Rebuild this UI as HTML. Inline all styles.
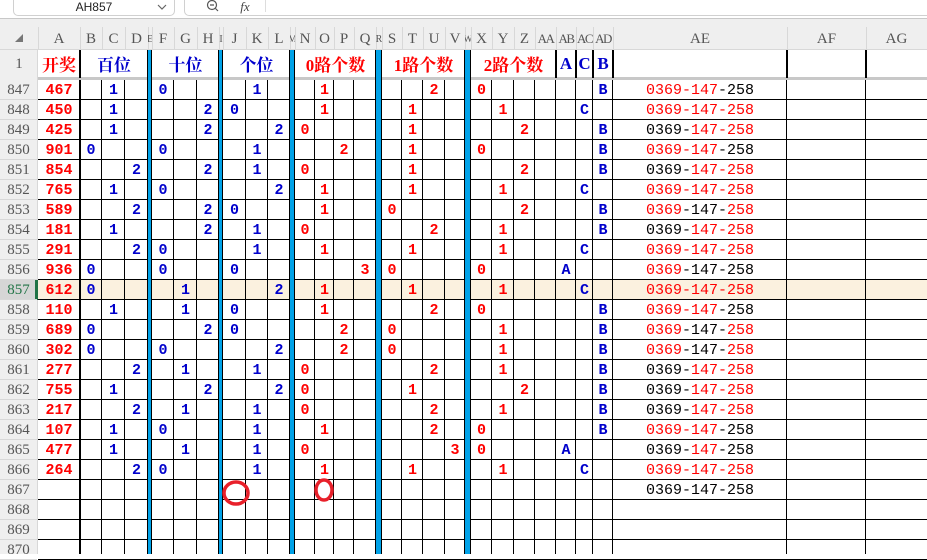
<!DOCTYPE html>
<html><head><meta charset="utf-8">
<style>
*{margin:0;padding:0;box-sizing:border-box}
body{width:927px;height:554px;overflow:hidden;background:#fff;position:relative;font-family:"Liberation Serif","Noto Serif CJK SC",serif}
.d{position:absolute}
.c{position:absolute;display:flex;align-items:center;justify-content:center;white-space:nowrap}
</style></head><body>
<div id="root"></div>
<script>
var B=[0,38,80,102,125,148,152,174,197,219,223,246,268,290,295,315,334,354,376,382,402,423,445,465,471,492,514,535,556,576,593,613,787,866,927];
var N=["","A","B","C","D","E","F","G","H","I","J","K","L","M","N","O","P","Q","R","S","T","U","V","W","X","Y","Z","AA","AB","AC","AD","AE","AF","AG"];
var blue={5:1,9:1,13:1,18:1,23:1};
var h='';
function box(x,y,w,hh,st){h+='<div class="d" style="left:'+x+'px;top:'+y+'px;width:'+w+'px;height:'+hh+'px;'+st+'"></div>';}
function txt(x,y,w,hh,t,st){h+='<div class="c" style="left:'+x+'px;top:'+y+'px;width:'+w+'px;height:'+hh+'px;'+st+'">'+t+'</div>';}
box(13,-6,162,22,'border:1px solid #d0d0d0;border-radius:5px;background:#fff');
txt(13,0,162,14,'AH857','font-size:12px;color:#222;font-family:Liberation Sans,sans-serif');
h+='<svg class="d" style="left:156px;top:2px" width="12" height="10"><path d="M2 3 L6 7 L10 3" fill="none" stroke="#666" stroke-width="1.2"/></svg>';
box(184,-6,760,22,'border:1px solid #d0d0d0;border-radius:5px;background:#fff');
h+='<svg class="d" style="left:205px;top:0" width="16" height="14"><circle cx="7" cy="5" r="4.5" fill="none" stroke="#555" stroke-width="1.2"/><path d="M5 5H9M10.5 8.5L13 11" stroke="#555" stroke-width="1.2"/></svg>';
txt(236,0,18,14,'<i>fx</i>','font-size:13px;color:#444');
box(265,0,1,12,'background:#ddd');
box(0,18,927,1,'background:#c8c8c8');
box(0,19,927,30,'background:#efefef');
box(0,49,927,1,'background:#d8d8d8');
h+='<svg class="d" style="left:14px;top:33px" width="10" height="10"><path d="M9 1V9H1Z" fill="#777"/></svg>';
for(var i=1;i<N.length;i++){var x=B[i],w=B[i+1]-B[i];box(x,27,1,22,'background:#d8d8d8');
 var fs=w<10?10:(N[i].length>1&&w<25?13:15); var ls=(N[i].length>1&&w<25)?';letter-spacing:-1.5px':'';
 txt(x,27,w,24,N[i],'font-size:'+fs+'px;color:#555;overflow:hidden'+ls);}
box(0,50,38,504,'background:#efefef');
box(37,50,1,504,'background:#d8d8d8');
txt(0,50,38,28,'1','font-size:15px;color:#555');
box(38,77,889,3,'background:#c8c8c8');
var R='color:#f00',Bl='color:#00c';
var hs='font-weight:bold;font-size:17px;';
txt(38,50,42,27,'开奖',hs+R);
txt(80,50,68,27,'百位',hs+Bl);txt(152,50,67,27,'十位',hs+Bl);txt(223,50,67,27,'个位',hs+Bl);
txt(295,50,81,27,'0路个数',hs+R);txt(382,50,83,27,'1路个数',hs+R);txt(471,50,85,27,'2路个数',hs+R);
txt(556,50,20,27,'A',hs+Bl);txt(576,50,17,27,'C',hs+Bl);txt(593,50,20,27,'B',hs+Bl);
[80,556,576,593,613,787,866].forEach(function(x){box(x-1,50,2,28,'background:#000');});
var nums=[467,450,425,901,854,765,589,181,291,936,612,110,689,302,277,755,217,107,477,264];
var top0=80;
box(38,280,889,20,'background:#fbf1df');
box(0,280,37,20,'background:#d6d6d6');box(35,280,3,20,'background:#217346');
for(var r=0;r<24;r++){
 var y=top0+r*20,rn=847+r;
 txt(0,y,37,20,rn,'font-size:15px;color:'+(rn==857?'#217346':'#555'));
 box(38,y+19,889,1,'background:#000');
 box(0,y+19,37,1,'background:#d8d8d8');
 if(r<20){
  var n=nums[r],d=[Math.floor(n/100),Math.floor(n/10)%10,n%10],m=d.map(function(v){return v%3;});
  var cnt=[0,0,0];m.forEach(function(v){cnt[v]++;});
  var f='font-weight:bold;font-size:15px;font-family:Liberation Mono,monospace;';
  txt(38,y+1,42,19,n,f+R);
  var g=[2,6,10];
  for(var k=0;k<3;k++){var ci=g[k]+m[k];txt(B[ci],y+1,B[ci+1]-B[ci],19,m[k],f+Bl);}
  var g2=[14,19,24];
  for(var k=0;k<3;k++){var ci=g2[k]+cnt[k];txt(B[ci],y+1,B[ci+1]-B[ci],19,cnt[k],f+R);}
  var li,lt;
  if(cnt[0]==3||cnt[1]==3||cnt[2]==3){li=28;lt='A';}else if(cnt[0]==1&&cnt[1]==1){li=29;lt='C';}else{li=30;lt='B';}
  txt(B[li],y+1,B[li+1]-B[li],19,lt,f+Bl);
 }
 if(r<21){
  var rc=[0,0,0];
  if(r<20){var n=nums[r],dd=[Math.floor(n/100),Math.floor(n/10)%10,n%10];dd.forEach(function(v){rc[v%3]=1;});}
  var segs=['0369','147','258'],s='';
  for(var k=0;k<3;k++){
   if(k>0){var dc=(rc[k-1]&&rc[k])?'#f00':'#000';s+='<span style="color:'+dc+'">-</span>';}
   s+='<span style="color:'+(rc[k]?'#f00':'#000')+'">'+segs[k]+'</span>';
  }
  txt(613,y+1,174,19,s,'font-size:15px;font-family:Liberation Mono,monospace');
 }
}
for(var i=2;i<B.length-1;i++){var x=B[i];box(x-1,80,1,474,'background:#000');}
box(79,80,2,474,'background:#000');
for(var k in blue){k=+k;var x=B[k],w=B[k+1]-B[k];box(x-1,50,w+1,504,'background:#000');box(x,50,w-1,504,'background:#00a2e8');}
h+='<svg class="d" style="left:0;top:0" width="927" height="554"><ellipse cx="236" cy="493" rx="12" ry="11" fill="none" stroke="#e8202a" stroke-width="3.5"/><ellipse cx="324" cy="490" rx="8" ry="10" fill="none" stroke="#e8202a" stroke-width="3.5"/></svg>';
document.getElementById('root').innerHTML=h;
</script>
</body></html>
